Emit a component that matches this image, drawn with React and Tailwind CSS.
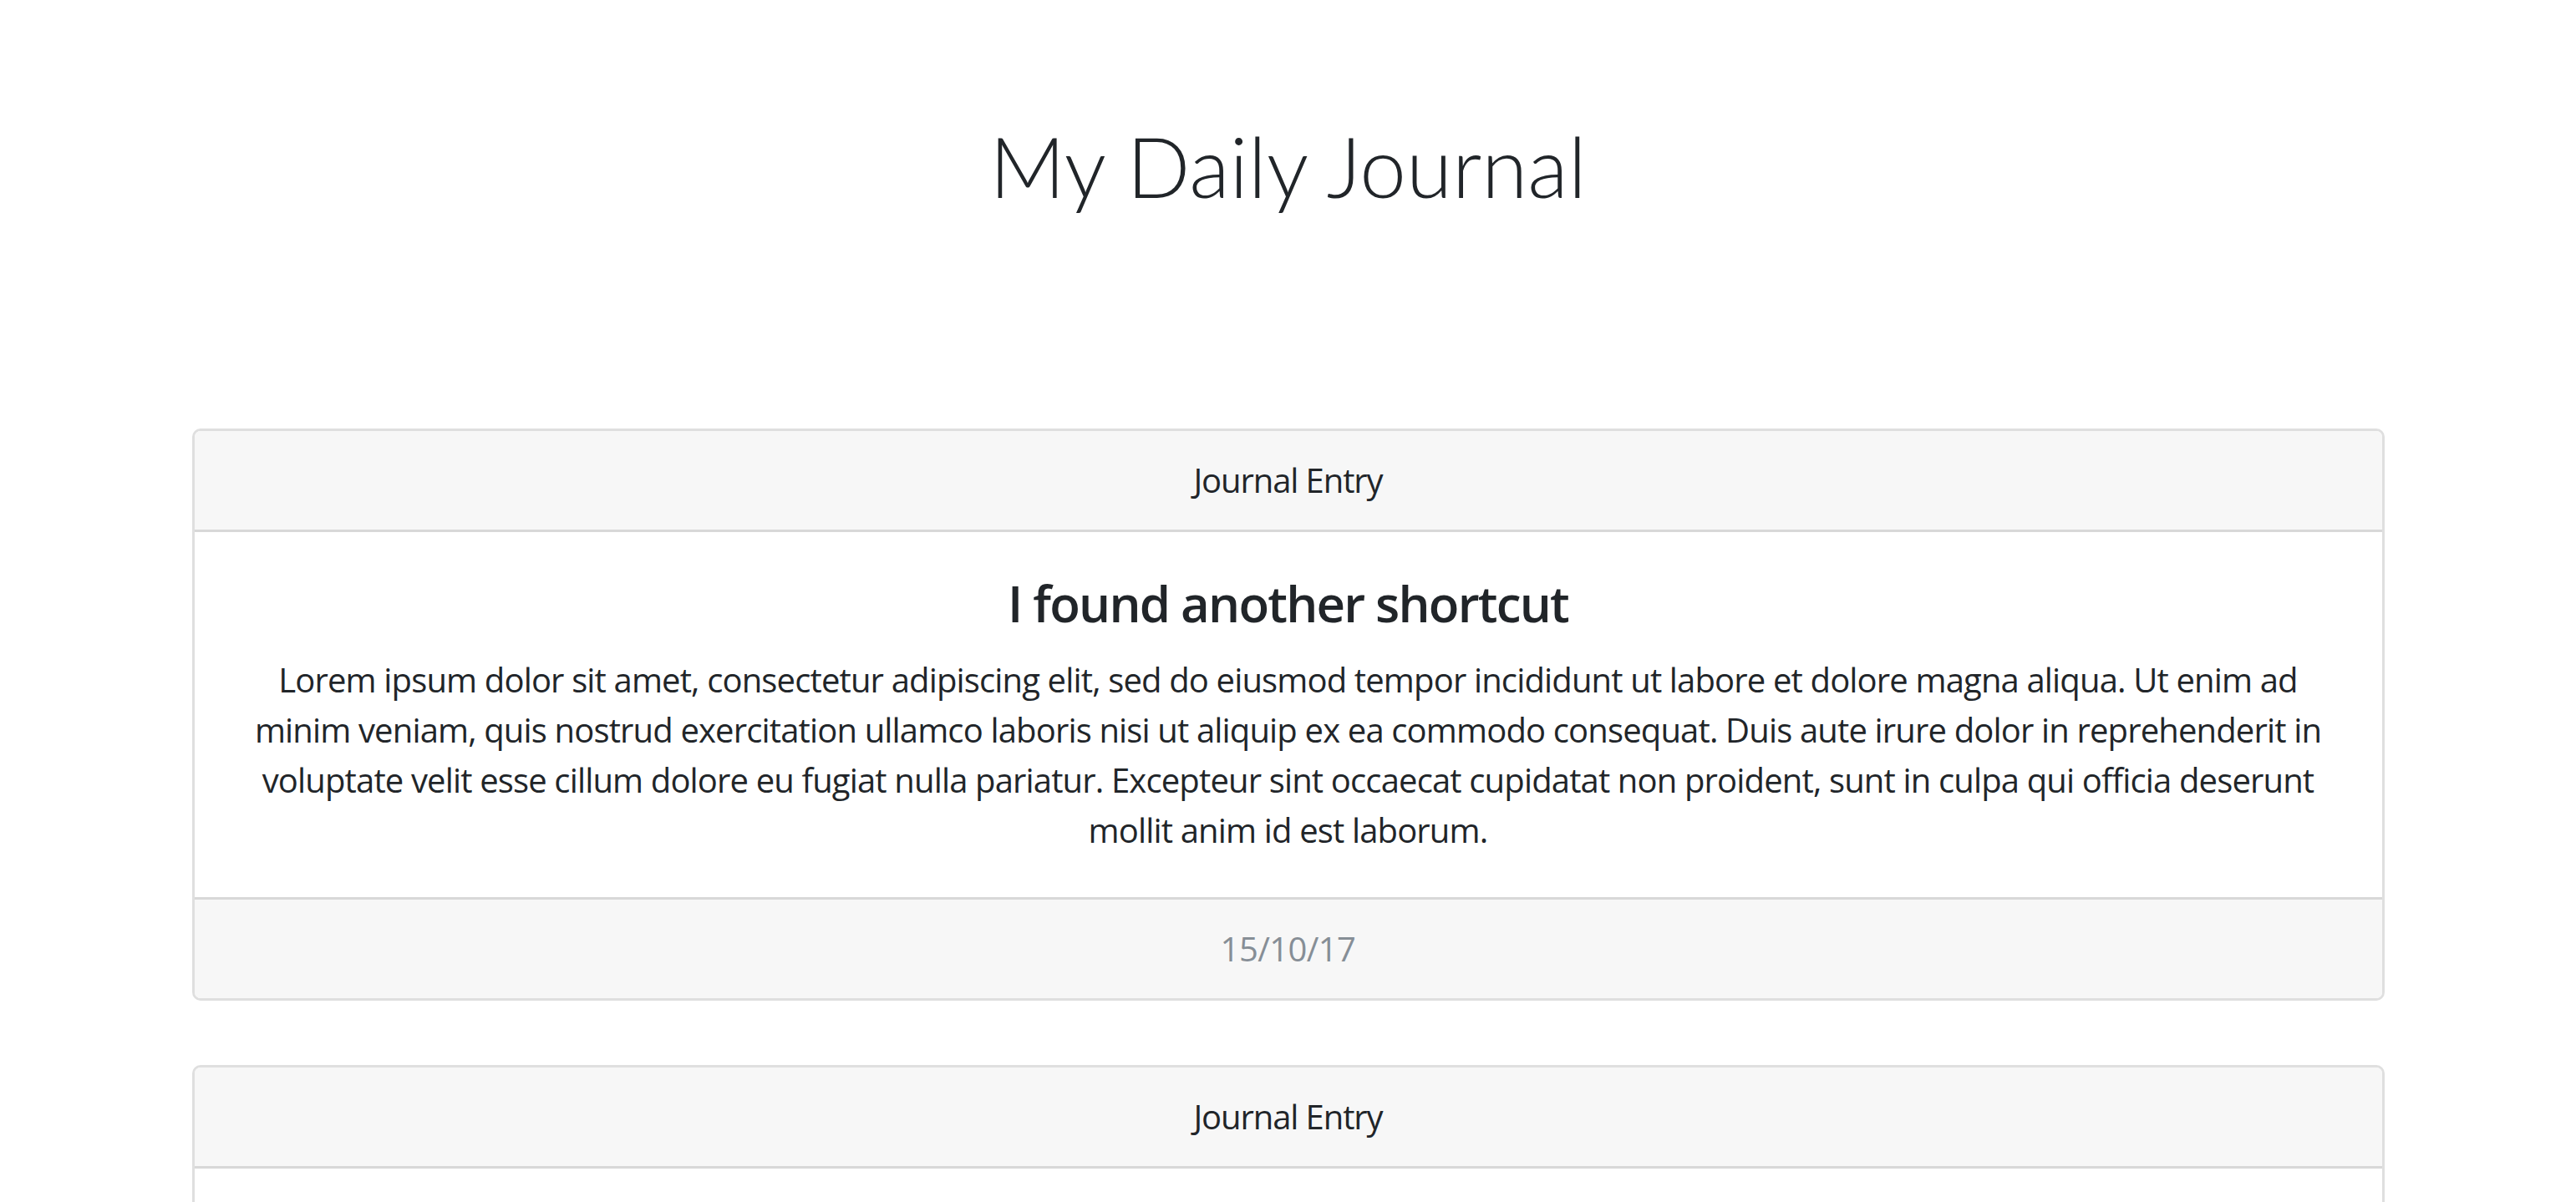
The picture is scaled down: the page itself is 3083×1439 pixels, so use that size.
import React from 'react';

const entries = [
  {
    title: 'I found another shortcut',
    body:
      'Lorem ipsum dolor sit amet, consectetur adipiscing elit, sed do eiusmod tempor incididunt ut labore et dolore magna aliqua. Ut enim ad minim veniam, quis nostrud exercitation ullamco laboris nisi ut aliquip ex ea commodo consequat. Duis aute irure dolor in reprehenderit in voluptate velit esse cillum dolore eu fugiat nulla pariatur. Excepteur sint occaecat cupidatat non proident, sunt in culpa qui officia deserunt mollit anim id est laborum.',
    date: '15/10/17',
  },
  {
    title: 'Walked to the river',
    body:
      'Lorem ipsum dolor sit amet, consectetur adipiscing elit, sed do eiusmod tempor incididunt ut labore et dolore magna aliqua. Ut enim ad minim veniam, quis nostrud exercitation ullamco laboris nisi ut aliquip ex ea commodo consequat.',
    date: '14/10/17',
  },
];

const JournalCard = ({ entry }) => (
  <div className="w-[2624px] mx-auto border-[3px] border-[#dfdfdf] rounded-[10px] overflow-hidden bg-white text-center">
    {/* Header */}
    <div className="bg-[#f7f7f7] border-b-[3px] border-[#d8d8d8] py-[29px] text-[40px] leading-[60px] tracking-[-1.1px] text-[#212529]">
      Journal Entry
    </div>

    {/* Body */}
    <div className="px-[50px] pt-[49px] pb-[50px]">
      <h4 className="text-[60px] leading-[72px] font-semibold tracking-[-1.8px] text-[#212529]">{entry.title}</h4>
      <p className="mt-[26px] text-[40px] leading-[60px] tracking-[-0.85px] text-[#212529]">{entry.body}</p>
    </div>

    {/* Footer */}
    <div className="bg-[#f7f7f7] border-t-[3px] border-[#d8d8d8] py-[29px] text-[40px] leading-[60px] tracking-[-0.6px] text-[#868e96]">
      {entry.date}
    </div>
  </div>
);

const App = () => {
  return (
    <div className="min-h-screen bg-white font-['Open_Sans',sans-serif] pt-[138px]">
      <h1 className="text-center font-['Lato',sans-serif] font-light text-[100px] leading-[120px] text-[#212529]">
        My Daily Journal
      </h1>

      <div className="mt-[255px] flex flex-col gap-[77px] pb-[77px]">
        {entries.map((entry) => (
          <JournalCard key={entry.date} entry={entry} />
        ))}
      </div>
    </div>
  );
};

export default App;
